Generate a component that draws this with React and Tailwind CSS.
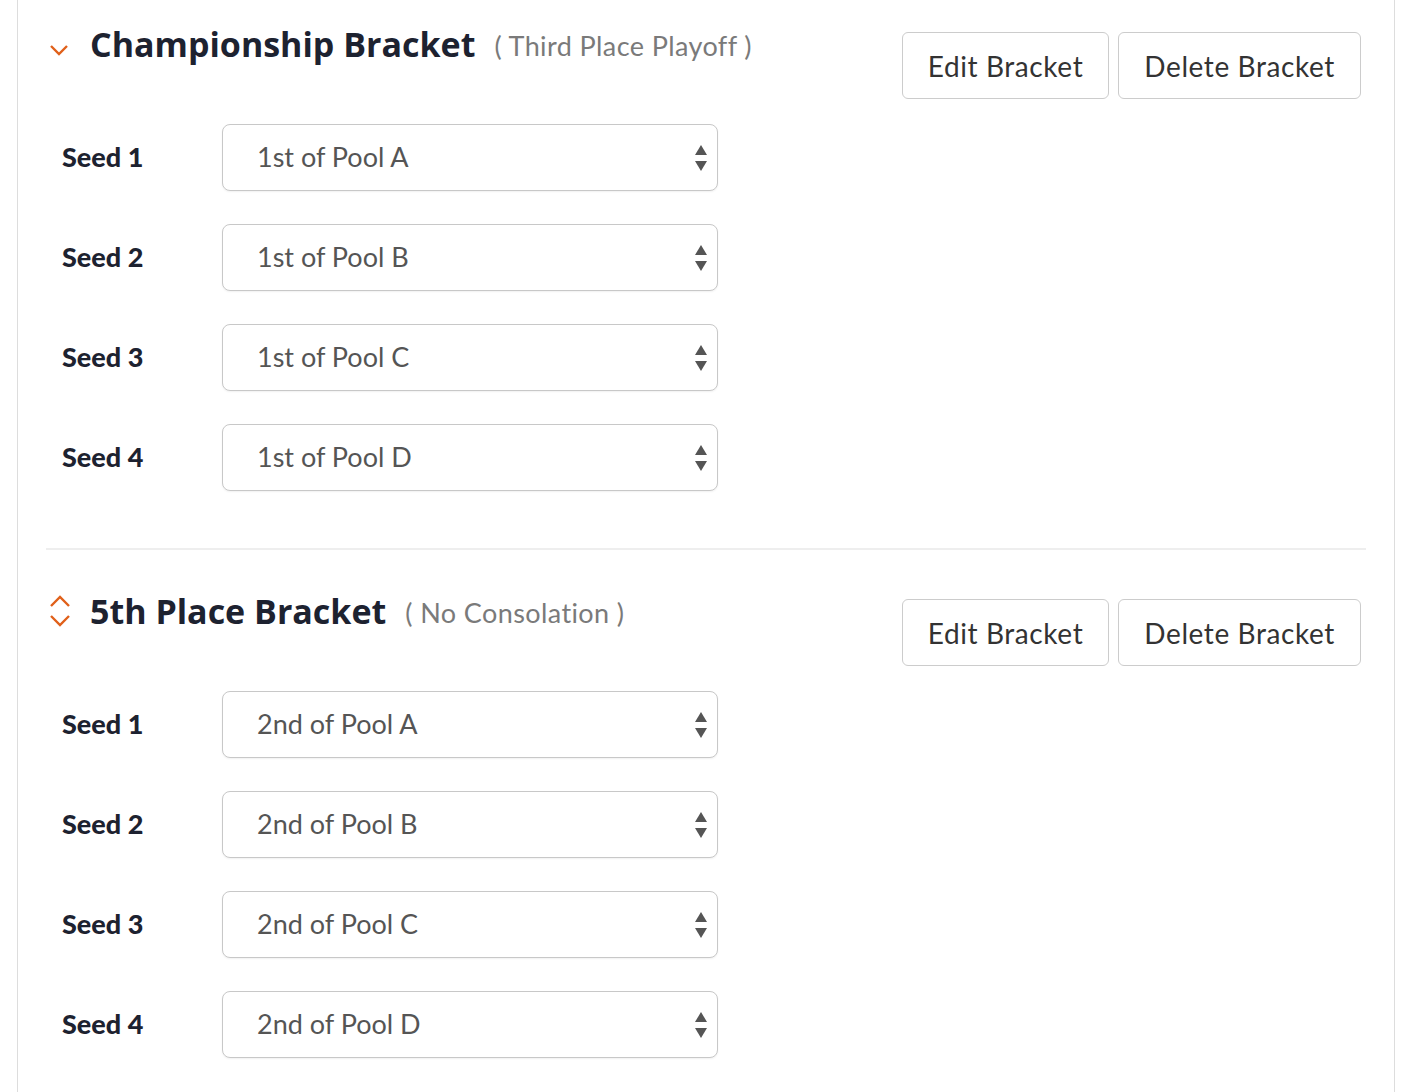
import { useState } from "react";

const brackets = [
  {
    title: "Championship Bracket",
    note: "( Third Place Playoff )",
    icon: "down",
    seeds: ["1st of Pool A", "1st of Pool B", "1st of Pool C", "1st of Pool D"],
  },
  {
    title: "5th Place Bracket",
    note: "( No Consolation )",
    icon: "sort",
    seeds: ["2nd of Pool A", "2nd of Pool B", "2nd of Pool C", "2nd of Pool D"],
  },
];

const ChevronDown = () => (
  <svg width="22" height="14" viewBox="0 0 22 14" fill="none">
    <path d="M3 3l8 8 8-8" stroke="#e0601a" strokeWidth="2.4" />
  </svg>
);

const ChevronSort = () => (
  <svg width="24" height="32" viewBox="0 0 24 32" fill="none">
    <path d="M3 11l9-9 9 9" stroke="#e0601a" strokeWidth="2.4" />
    <path d="M3 21l9 9 9-9" stroke="#e0601a" strokeWidth="2.4" />
  </svg>
);

const SelectArrows = () => (
  <svg width="14" height="26" viewBox="0 0 14 26">
    <path d="M7 0l6 10H1z" fill="#555" />
    <path d="M7 26l6-10H1z" fill="#555" />
  </svg>
);

const SeedSelect = ({ value }) => (
  <div className="relative w-[496px] h-[67px] rounded-[8px] border border-[#c8c8c8] bg-white shadow-[0_1px_2px_rgba(0,0,0,0.06)] flex items-center pl-[34px]">
    <span className="text-[27px] text-[#555]">{value}</span>
    <div className="absolute right-[9px] top-[20px]">
      <SelectArrows />
    </div>
  </div>
);

const btn =
  "h-[67px] px-[25px] rounded-[6px] border border-[#cccccc] bg-white text-[28px] tracking-[0.6px] text-[#333]";

const Bracket = ({ bracket, first }) => (
  <section className={first ? "" : "border-t-2 border-[#eeeeee] pt-[17px]"}>
    {/* Header */}
    <div className="flex items-start justify-between">
      <div className="flex items-center pt-[22px]">
        <div className="w-[44px] flex justify-start pl-[2px]">
          {bracket.icon === "down" ? (
            <div className="pt-[12px]">
              <ChevronDown />
            </div>
          ) : (
            <ChevronSort />
          )}
        </div>
        <h2
          className="text-[34px] leading-[44px] font-bold text-[#1d2230]"
          style={{ fontFamily: "'Open Sans', sans-serif" }}
        >
          {bracket.title}
        </h2>
        <span className="ml-[19px] text-[27px] tracking-[0.4px] text-[#7a7a7a] pt-[4px]">
          {bracket.note}
        </span>
      </div>
      <div className="flex gap-[9px] mt-[32px] mr-[5px]">
        <button className={btn}>Edit Bracket</button>
        <button className={btn}>Delete Bracket</button>
      </div>
    </div>

    {/* Seeds */}
    <div className="flex flex-col gap-[33px] mt-[25px] pb-[57px]">
      {bracket.seeds.map((s, i) => (
        <div key={s} className="flex items-center">
          <div className="w-[176px] pl-[16px] text-[27px] font-black text-[#1d2230]">
            Seed {i + 1}
          </div>
          <SeedSelect value={s} />
        </div>
      ))}
    </div>
  </section>
);

export default function App() {
  const [items] = useState(brackets);
  return (
    <div
      className="bg-white min-h-[1092px] pl-[17px] pr-[13px]"
      style={{ fontFamily: "Lato, 'Open Sans', sans-serif" }}
    >
      <div className="border-x border-[#dddddd] min-h-[1092px] px-[28px]">
        {items.map((b, i) => (
          <Bracket key={b.title} bracket={b} first={i === 0} />
        ))}
      </div>
    </div>
  );
}
